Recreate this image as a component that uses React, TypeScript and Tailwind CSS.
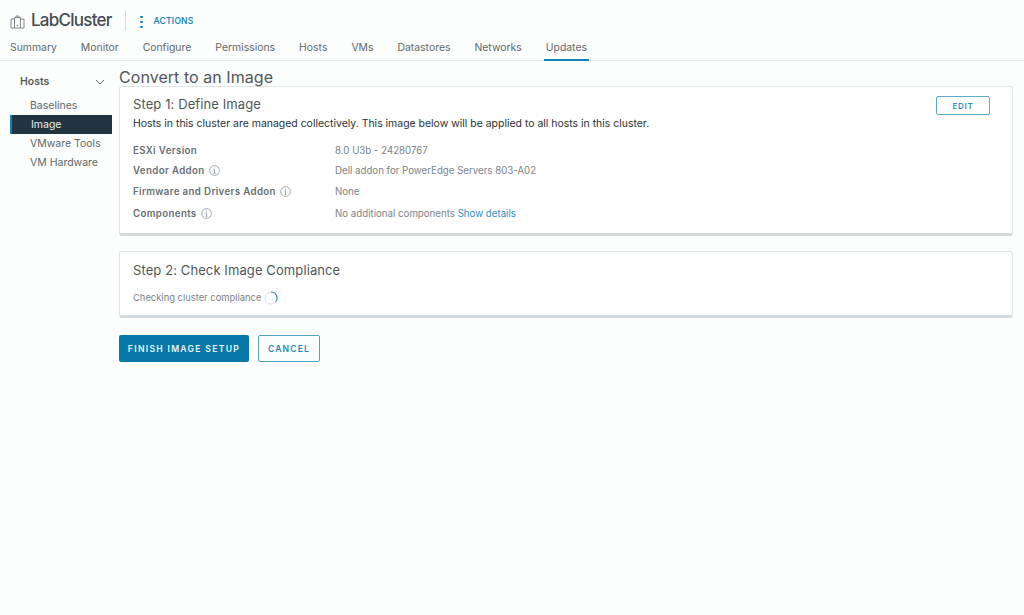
import React from "react";

const tabs = ["Summary", "Monitor", "Configure", "Permissions", "Hosts", "VMs", "Datastores", "Networks", "Updates"];
const sideItems = ["Baselines", "Image", "VMware Tools", "VM Hardware"];

function Info() {
  return (
    <svg width="11" height="11" viewBox="0 0 12 12" fill="none" stroke="#8c979d" strokeWidth="0.9" className="ml-[4px] shrink-0">
      <circle cx="6" cy="6" r="5.3" />
      <path d="M6 5.2V9M4.9 9.1h2.2M4.9 5.2H6" />
      <circle cx="5.9" cy="3.3" r="0.6" fill="#8c979d" stroke="none" />
    </svg>
  );
}

function Row({ label, info, h, children }: { label: string; info?: boolean; h: string; children: React.ReactNode }) {
  return (
    <div className={`flex items-center ${h}`}>
      <div className="w-[202px] flex items-center font-semibold text-[#666e73] tracking-[0.36px]">
        {label}
        {info && <Info />}
      </div>
      <div className="text-[#7c8387]">{children}</div>
    </div>
  );
}

export default function App() {
  return (
    <div className="h-[615px] w-[1024px] overflow-hidden bg-[#fcfdfd] flex flex-col font-['Inter',sans-serif] text-[#565d61]">
      <header className="h-[37px] flex items-end pl-[10px] pb-[6px]">
        <svg width="15" height="14" viewBox="0 0 15 14" fill="none" stroke="#737c81" strokeWidth="0.9" className="mb-[2px]">
          <path d="M4.5 13V2.5h6V13z" />
          <path d="M6 2.5V1h3v1.5" />
          <path d="M4.5 4H1v9h3.5M10.5 4H14v9h-3.5" />
          <circle cx="7.5" cy="10.5" r="0.8" fill="#737c81" stroke="none" />
        </svg>
        <div className="ml-[6px] text-[17px] leading-[22px] font-medium text-[#454c50] tracking-[-0.75px] w-[94px]">LabCluster</div>
        <div className="w-px h-[20px] bg-[#d5dadc] mr-[14px]" />
        <div className="flex flex-col gap-[2.5px] mb-[3px] mr-[11px]">
          <span className="w-[2.5px] h-[2.5px] rounded-full bg-[#0d7fb0]" />
          <span className="w-[2.5px] h-[2.5px] rounded-full bg-[#0d7fb0]" />
          <span className="w-[2.5px] h-[2.5px] rounded-full bg-[#0d7fb0]" />
        </div>
        <div className="text-[8.5px] leading-[20px] font-semibold text-[#1b8abb] tracking-[0.2px]">ACTIONS</div>
      </header>

      <nav className="h-[24px] flex pl-[10px] gap-[24px] border-b border-[#dde2e4] text-[10.42px] text-[#60686c] shrink-0">
        {tabs.map((t) => (
          <div key={t} className={t === "Updates" ? "relative pt-[4px] leading-[14px]" : "pt-[4px] leading-[14px]"}>
            {t}
            {t === "Updates" && <div className="absolute left-[-2px] right-[-2px] bottom-[-1px] h-[2px] bg-[#0f82b5]" />}
          </div>
        ))}
      </nav>

      <div className="flex flex-1 min-h-0">
        <aside className="w-[109px] shrink-0 pl-[10px] pt-[11px] text-[10.5px]">
          <div className="w-[102px] h-[20px] flex items-center justify-between pl-[10px] pr-[7px] font-semibold text-[#565d61]">
            <span>Hosts</span>
            <svg width="10" height="6" viewBox="0 0 10 6" fill="none" stroke="#5f676b" strokeWidth="1"><path d="M1 1l4 4 4-4" /></svg>
          </div>
          <div className="mt-[4px] flex flex-col w-[102px]">
            {sideItems.map((s) => (
              <div
                key={s}
                className={
                  s === "Image"
                    ? "h-[19px] flex items-center pl-[19px] bg-[#22343f] text-[#e6ebee] border-l-[2px] border-[#0f82b5]"
                    : "h-[19px] flex items-center pl-[20px] text-[#60686c]"
                }
              >
                {s}
              </div>
            ))}
          </div>
        </aside>

        <main className="flex-1 pl-[10px] pr-[11px] pt-[7px] min-w-0">
          <h1 className="text-[16px] leading-[18px] text-[#50575b] tracking-[0.05px]">Convert to an Image</h1>

          <section className="h-[150px] bg-white border border-[#e0e5e8] border-b-[3px] border-b-[#d3d9dc] rounded-[3px] px-[13px] pt-[8px]">
            <div className="flex items-start justify-between">
              <div className="text-[13px] leading-[18px] text-[#50575b] tracking-[0.1px]">Step 1: Define Image</div>
              <button className="w-[54px] h-[19px] mt-[1px] mr-[9px] border border-[#5eaccd] rounded-[2px] text-[8px] font-semibold tracking-[0.7px] text-[#2f8fb9]">EDIT</button>
            </div>
            <p className="mt-[2px] text-[10.46px] leading-[14px] text-[#2b3033]">
              Hosts in this cluster are managed collectively. This image below will be applied to all hosts in this cluster.
            </p>
            <div className="mt-[10px] text-[9.7px]">
              <Row label="ESXi Version" h="h-[20px]">8.0 U3b - 24280767</Row>
              <Row label="Vendor Addon" info h="h-[20px]">Dell addon for PowerEdge Servers 803-A02</Row>
              <Row label="Firmware and Drivers Addon" info h="h-[22px]">None</Row>
              <Row label="Components" info h="h-[22px]">
                No additional components <span className="text-[#2b90bd]">Show details</span>
              </Row>
            </div>
          </section>

          <section className="h-[67px] mt-[15px] bg-white border border-[#e0e5e8] border-b-[3px] border-b-[#d3d9dc] rounded-[3px] px-[13px] pt-[9px]">
            <div className="text-[13px] leading-[18px] text-[#50575b] tracking-[0.1px]">Step 2: Check Image Compliance</div>
            <div className="mt-[12px] flex items-center text-[9.4px] text-[#7c8387]">
              Checking cluster compliance
              <svg width="14" height="14" viewBox="0 0 14 14" fill="none" className="ml-[3px]">
                <circle cx="7" cy="7" r="6" stroke="#d9e0e3" strokeWidth="1" />
                <path d="M7 1a6 6 0 0 1 4.5 10" stroke="#2b90bd" strokeWidth="1.1" />
              </svg>
            </div>
          </section>

          <div className="mt-[17px] flex gap-[9px]">
            <button className="w-[130px] h-[27px] pt-[1px] bg-[#0679a9] rounded-[2px] text-[8.6px] font-semibold tracking-[1.3px] text-[#eef6fa]">FINISH IMAGE SETUP</button>
            <button className="w-[62px] h-[27px] pt-[1px] border border-[#4ea3c7] rounded-[2px] text-[8.6px] font-semibold tracking-[1.15px] text-[#1f88b6]">CANCEL</button>
          </div>
        </main>
      </div>
    </div>
  );
}
